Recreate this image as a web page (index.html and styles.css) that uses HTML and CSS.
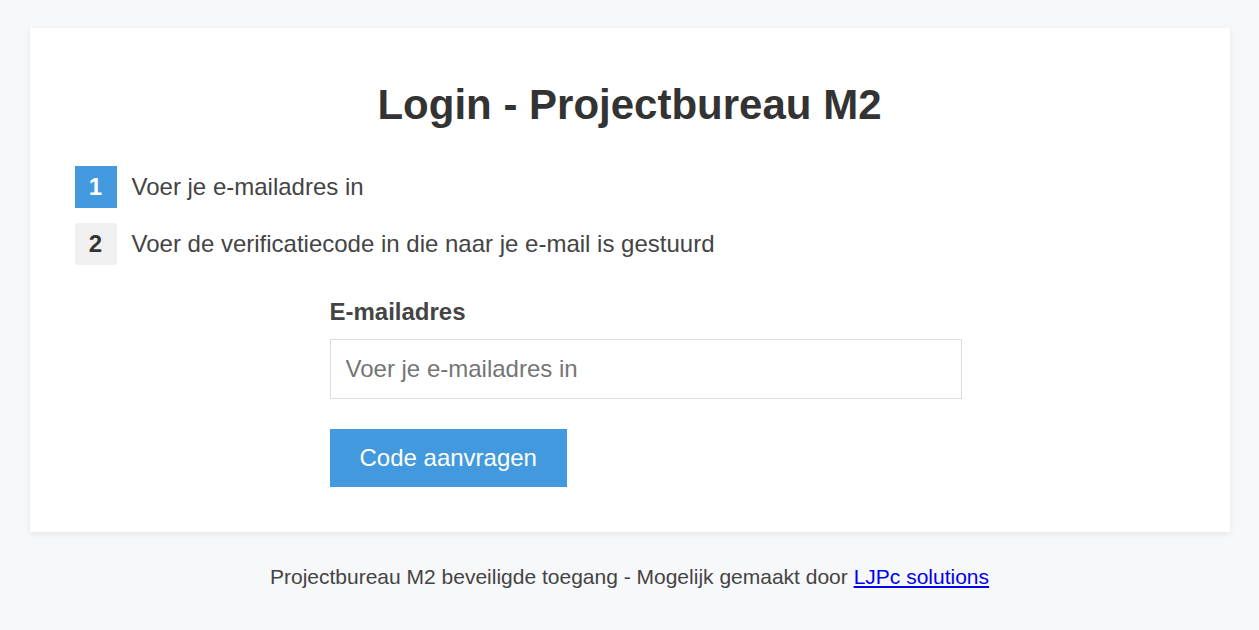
FILE: index.html
```
<!DOCTYPE html>
<html lang="nl">
<head>
  <meta charset="UTF-8">
  <meta name="viewport" content="width=device-width, initial-scale=1.0">
  <title>Login - Projectbureau M2</title>
  <link rel="stylesheet" href="styles.css">
</head>
<body>

  <div class="login-card">
    <h1>Login - Projectbureau M2</h1>

    <div class="steps">
      <div class="step">
        <span class="step-number active">1</span>
        <span class="step-text">Voer je e-mailadres in</span>
      </div>
      <div class="step">
        <span class="step-number">2</span>
        <span class="step-text">Voer de verificatiecode in die naar je e-mail is gestuurd</span>
      </div>
    </div>

    <form class="login-form" onsubmit="return false;">
      <label for="email">E-mailadres</label>
      <input type="email" id="email" name="email" placeholder="Voer je e-mailadres in">
      <button type="submit">Code aanvragen</button>
    </form>
  </div>

  <p class="footer">Projectbureau M2 beveiligde toegang - Mogelijk gemaakt door <a href="#">LJPc solutions</a></p>

</body>
</html>
```
FILE: styles.css
```
body {
  font-family: 'Liberation Sans', Arial, sans-serif;
  background-color: #f7f8fa;
  color: #333;
  margin: 0;
  padding: 28px 0 0;
}

.login-card {
  background-color: #fff;
  max-width: 1110px;
  margin: 0 auto;
  padding: 53px 45px 45px;
  box-shadow: 0 2px 6px rgba(0, 0, 0, 0.08);
}

.login-card h1 {
  text-align: center;
  font-size: 42px;
  font-weight: 700;
  color: #333;
  margin: 0 0 37px;
}

.steps {
  display: flex;
  flex-direction: column;
  gap: 15px;
}

.step {
  display: flex;
  align-items: center;
  gap: 15px;
}

.step-number {
  width: 42px;
  height: 42px;
  display: flex;
  align-items: center;
  justify-content: center;
  background-color: #f0f0f0;
  color: #333;
  font-size: 24px;
  font-weight: 700;
}

.step-number.active {
  background-color: #4299de;
  color: #fff;
}

.step-text {
  font-size: 24px;
  color: #444;
}

.login-form {
  max-width: 600px;
  margin: 33px auto 0;
}

.login-form label {
  display: block;
  font-size: 24px;
  font-weight: 700;
  color: #444;
  margin-bottom: 13px;
}

.login-form input {
  display: block;
  width: 100%;
  padding: 15px;
  font-family: inherit;
  font-size: 24px;
  color: #333;
  border: 1px solid #ddd;
  margin: 0 0 30px;
  outline: none;
}

.login-form input::placeholder {
  color: #757575;
}

.login-form button {
  display: block;
  font-family: inherit;
  font-size: 24px;
  color: #fff;
  background-color: #4299de;
  border: none;
  padding: 15px 30px;
  cursor: pointer;
}

.footer {
  text-align: center;
  font-size: 21px;
  color: #444;
  margin: 33px 0 0;
}

.footer a {
  color: #0000ee;
}
```
